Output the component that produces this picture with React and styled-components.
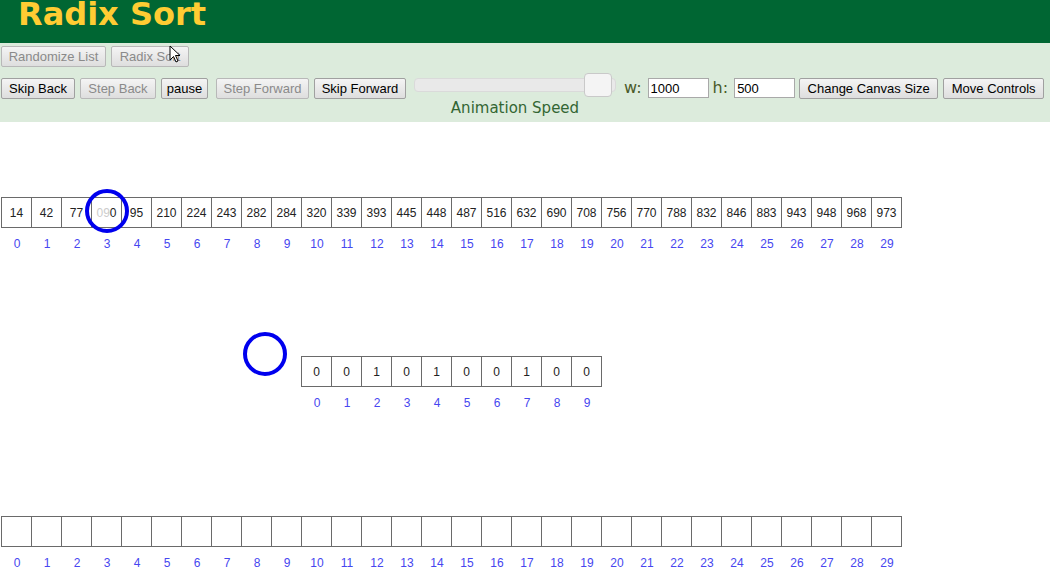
import React from 'react'
import styled, { createGlobalStyle } from 'styled-components'

const GlobalStyle = createGlobalStyle`
  html, body {
    margin: 0;
    padding: 0;
    background: #ffffff;
    font-family: "Liberation Sans", Arial, sans-serif;
  }
`;

const Page = styled.div`
  width: 1050px;
  height: 586px;
  display: flex;
  flex-direction: column;
  overflow: hidden;
  position: relative;
`;

const Header = styled.header`
  height: 43px;
  background: #006633;
  display: flex;
  align-items: flex-start;
  padding-left: 18px;
  overflow: hidden;
`;

const Title = styled.h1`
  margin: 0;
  font-family: "DejaVu Sans", Verdana, sans-serif;
  font-weight: bold;
  font-size: 32px;
  line-height: 32px;
  color: #ffcc33;
  margin-top: -2px;
`;

const Panel = styled.section`
  height: 79px;
  background: #dcebdc;
  display: flex;
  flex-direction: column;
`;

const Row = styled.div`
  display: flex;
  align-items: flex-start;
  padding-left: 1px;
  margin-top: ${p => p.$top}px;
`;

const Button = styled.button`
  box-sizing: border-box;
  width: ${p => p.$w}px;
  height: 21px;
  margin-right: ${p => p.$gap ?? 5}px;
  margin-top: ${p => p.$top ?? 0}px;
  padding: 0;
  font-family: "Liberation Sans", Arial, sans-serif;
  font-size: 13px;
  color: ${p => (p.disabled ? '#8a8a8a' : '#000')};
  background: linear-gradient(#f4f4f4, #dedede);
  border: 1px solid ${p => (p.disabled ? '#b8b8b8' : '#a0a0a0')};
  border-radius: 2px;
  white-space: nowrap;
`;

const SliderBox = styled.div`
  width: 202px;
  display: flex;
  flex-direction: column;
  align-items: center;
  margin-left: 3px;
  margin-right: 8px;
`;

const Track = styled.div`
  position: relative;
  width: 202px;
  height: 24px;
  display: flex;
  align-items: center;
`;

const TrackBar = styled.div`
  width: 100%;
  height: 14px;
  box-sizing: border-box;
  background: #e9e9e9;
  border: 1px solid #dadada;
  border-radius: 4px;
`;

const Thumb = styled.div`
  position: absolute;
  left: 170px;
  top: 0;
  width: 28px;
  height: 24px;
  box-sizing: border-box;
  background: #f4f4f4;
  border: 1px solid #c9c9c9;
  border-radius: 4px;
`;

const SliderLabel = styled.div`
  font-family: "DejaVu Sans", Verdana, sans-serif;
  font-size: 15px;
  color: #336633;
  margin-top: 2px;
  line-height: 18px;
`;

const FieldLabel = styled.span`
  font-family: "DejaVu Sans", Verdana, sans-serif;
  font-size: 16px;
  color: #4a5a2a;
  margin-top: 5px;
  margin-right: 6px;
  line-height: 20px;
`;

const Field = styled.input`
  box-sizing: border-box;
  width: 61px;
  height: 20px;
  margin-top: 5px;
  margin-right: 4px;
  padding: 1px 2px;
  border: 1px solid #a9a9a9;
  font-family: "Liberation Sans", Arial, sans-serif;
  font-size: 13px;
  background: #fff;
`;

const Canvas = styled.main`
  flex: 1;
  position: relative;
  background: #fff;
`;

const ArrayGroup = styled.div`
  position: absolute;
  left: ${p => p.$x}px;
  top: ${p => p.$y}px;
  display: flex;
  flex-direction: column;
`;

const Cells = styled.div`
  display: flex;
  border-left: 1px solid #6a6a6a;
`;

const Cell = styled.div`
  box-sizing: border-box;
  width: 30px;
  height: 31px;
  border: 1px solid #6a6a6a;
  border-left: none;
  display: flex;
  align-items: center;
  justify-content: center;
  font-size: 12px;
  color: #222;
`;

const Faded = styled.span`
  color: #cccccc;
`;

const Indices = styled.div`
  display: flex;
  margin-top: 9px;
  margin-left: 1px;
`;

const Index = styled.div`
  width: 30px;
  text-align: center;
  font-size: 12px;
  line-height: 14px;
  color: #4646f0;
`;

const Ring = styled.div`
  position: absolute;
  left: ${p => p.$x - 22}px;
  top: ${p => p.$y - 22}px;
  width: 44px;
  height: 44px;
  box-sizing: border-box;
  border: 4px solid #0000ee;
  border-radius: 50%;
`;

const Cursor = styled.svg`
  position: absolute;
  left: 169px;
  top: 45px;
`;

const values = [14, 42, 77, '090', 95, 210, 224, 243, 282, 284, 320, 339, 393, 445, 448, 487, 516, 632, 690, 708, 756, 770, 788, 832, 846, 883, 943, 948, 968, 973];
const counts = [0, 0, 1, 0, 1, 0, 0, 1, 0, 0];

function ArrayView({ x, y, items }) {
  return (
    <ArrayGroup $x={x} $y={y}>
      <Cells>
        {items.map((v, i) => (
          <Cell key={i}>
            {v === '090' ? <><Faded>09</Faded>0</> : v}
          </Cell>
        ))}
      </Cells>
      <Indices>
        {items.map((_, i) => <Index key={i}>{i}</Index>)}
      </Indices>
    </ArrayGroup>
  )
}

export default function App() {
  return (
    <Page>
      <GlobalStyle />
      <Header>
        <Title>Radix Sort</Title>
      </Header>
      <Panel>
        <Row $top={3}>
          <Button $w={105} disabled>Randomize List</Button>
          <Button $w={78} disabled>Radix Sort</Button>
        </Row>
        <Row $top={6}>
          <Button $w={74} $top={5}>Skip Back</Button>
          <Button $w={76} $top={5} disabled>Step Back</Button>
          <Button $w={47} $top={5} $gap={8}>pause</Button>
          <Button $w={93} $top={5} disabled>Step Forward</Button>
          <Button $w={92} $top={5}>Skip Forward</Button>
          <SliderBox>
            <Track>
              <TrackBar />
              <Thumb />
            </Track>
            <SliderLabel>Animation Speed</SliderLabel>
          </SliderBox>
          <FieldLabel>w:</FieldLabel>
          <Field defaultValue="1000" />
          <FieldLabel>h:</FieldLabel>
          <Field defaultValue="500" />
          <Button $w={139} $top={5}>Change Canvas Size</Button>
          <Button $w={101} $top={5}>Move Controls</Button>
        </Row>
      </Panel>
      <Canvas>
        <ArrayView x={1} y={75} items={values} />
        <ArrayView x={301} y={234} items={counts} />
        <ArrayView x={1} y={394} items={Array(30).fill('')} />
        <Ring $x={107} $y={89} />
        <Ring $x={265} $y={232} />
      </Canvas>
      <Cursor width="14" height="20" viewBox="0 0 14 20">
        <path d="M1 1 L1 15 L4.5 11.5 L7 17 L9 16 L6.5 10.5 L11 10.5 Z" fill="#fff" stroke="#000" strokeWidth="1" />
      </Cursor>
    </Page>
  )
}
